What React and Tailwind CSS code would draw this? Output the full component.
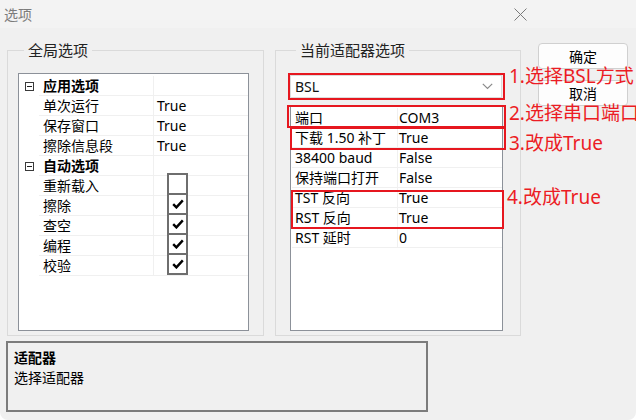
const font = "font-['Noto_Sans','Noto_Sans_CJK_SC',sans-serif]";

const globalRows = [
  { type: 'cat', label: '应用选项' },
  { label: '单次运行', value: 'True' },
  { label: '保存窗口', value: 'True' },
  { label: '擦除信息段', value: 'True' },
  { type: 'cat', label: '自动选项' },
  { label: '重新载入', check: false },
  { label: '擦除', check: true },
  { label: '查空', check: true },
  { label: '编程', check: true },
  { label: '校验', check: true },
];

const adapterRows = [
  ['端口', 'COM3'],
  ['下载 1.50 补丁', 'True'],
  ['38400 baud', 'False'],
  ['保持端口打开', 'False'],
  ['TST 反向', 'True'],
  ['RST 反向', 'True'],
  ['RST 延时', '0'],
];

function Collapse() {
  return (
    <span className="ml-[6px] flex h-[9px] w-[9px] items-center justify-center border border-[#3a3a3a]">
      <span className="h-px w-[5px] bg-[#222]" />
    </span>
  );
}

function CheckBox({ checked }) {
  return (
    <span className="-mt-[3px] ml-[10px] flex h-[22px] w-[21px] items-center justify-center border-2 border-[#6e6e6e] bg-white">
      {checked && (
        <svg width="12" height="10" viewBox="0 0 12 10">
          <path d="M1.2 5.2 L4.4 8.4 L10.8 1.4" fill="none" stroke="#000" strokeWidth="2.4" />
        </svg>
      )}
    </span>
  );
}

function GlobalGrid() {
  return (
    <div className="h-[258px] w-[231px] border border-[#8c9199] bg-white pt-[2px]">
      {globalRows.map((r, i) => (
        <div key={i} className="flex h-[20px] text-[14px] leading-[20px] text-black">
          <div className="flex w-[20px] items-center">{r.type === 'cat' && <Collapse />}</div>
          <div
            className={`w-[114px] border-b border-[#f0f0f0] pl-[4px] ${r.type === 'cat' ? 'font-bold' : ''}`}
          >
            {r.label}
          </div>
          <div className="flex flex-1 items-start border-b border-l border-[#f0f0f0] pl-[3px]">
            {r.value}
            {r.check !== undefined && <CheckBox checked={r.check} />}
          </div>
        </div>
      ))}
    </div>
  );
}

function AdapterGrid() {
  return (
    <div className="mt-[8px] h-[225px] w-[213px] border border-[#8c9199] bg-white pl-[1px] pt-[1px]">
      {adapterRows.map(([k, v]) => (
        <div key={k} className="flex h-[20px] text-[14px] leading-[20px] text-black">
          <div className="w-[105px] border-b border-[#f0f0f0] pl-[3px]">{k}</div>
          <div className="flex-1 border-b border-l border-[#f0f0f0] pl-[1px]">{v}</div>
        </div>
      ))}
    </div>
  );
}

function Group({ title, className, children }) {
  return (
    <fieldset className={`border border-[#dadada] ${className}`}>
      <legend className="ml-[6px] px-[4px] text-[15px] leading-[20px] text-[#222]">{title}</legend>
      {children}
    </fieldset>
  );
}

function Button({ children, className }) {
  return (
    <button className={`h-[26px] w-[90px] rounded-[4px] border border-[#d0d0d0] bg-[#fdfdfd] text-[14px] text-black ${className}`}>
      {children}
    </button>
  );
}

export default function App() {
  return (
    <div className={`relative h-[420px] w-[636px] overflow-hidden rounded-b-[8px] bg-[#f0f0f0] ${font}`}>
      <div className="flex h-[28px] items-center justify-between bg-[#f3f3f3] pl-[4px] pr-[116px]">
        <span className="text-[14px] text-[#7c7c7c]">选项</span>
        <svg width="13" height="13" viewBox="0 0 13 13" className="translate-x-[7px]">
          <path d="M0.5 0.5 L12.5 12.5 M12.5 0.5 L0.5 12.5" stroke="#7a7a7a" strokeWidth="1" />
        </svg>
      </div>

      <div className="flex pt-[12px]">
        <Group title="全局选项" className="ml-[7px] h-[296px] w-[257px] pl-[10px] pt-[13px]">
          <GlobalGrid />
        </Group>

        <Group title="当前适配器选项" className="ml-[11px] h-[296px] w-[246px] pl-[14px] pt-[15px]">
          <div className="flex h-[23px] w-[212px] items-center justify-between border border-[#dcdcdc] bg-white pl-[4px] pr-[8px] text-[14px] text-[#111]">
            BSL
            <svg width="11" height="7" viewBox="0 0 11 7">
              <path d="M0.8 0.8 L5.5 5.5 L10.2 0.8" fill="none" stroke="#8a8a8a" strokeWidth="1.2" />
            </svg>
          </div>
          <AdapterGrid />
        </Group>

        <div className="ml-[17px] flex flex-col gap-[11px] pt-[3px]">
          <Button>确定</Button>
          <Button>取消</Button>
        </div>
      </div>

      <div className="ml-[6px] mt-[5px] h-[71px] w-[422px] border-2 border-[#7c7c7c] px-[6px] pt-[5px] text-[14px] leading-[20px] text-black">
        <div className="font-bold">适配器</div>
        <div>选择适配器</div>
      </div>

      {/* annotations */}
      <div className="pointer-events-none absolute left-[288px] top-[73px] h-[27px] w-[217px] border-2 border-[#e6171f]" />
      <div className="pointer-events-none absolute left-[287px] top-[105px] h-[23px] w-[219px] border-2 border-[#e6171f]" />
      <div className="pointer-events-none absolute left-[290px] top-[127px] h-[23px] w-[216px] border-2 border-[#e6171f]" />
      <div className="pointer-events-none absolute left-[291px] top-[190px] h-[39px] w-[213px] border-2 border-[#e6171f]" />
      <div className="absolute left-[509px] top-[63px] whitespace-nowrap text-[19px] leading-[26px] text-[#ec1c24]">1.选择BSL方式</div>
      <div className="absolute left-[509px] top-[100px] whitespace-nowrap text-[19px] leading-[26px] text-[#ec1c24]">2.选择串口端口</div>
      <div className="absolute left-[509px] top-[130px] whitespace-nowrap text-[19px] leading-[26px] text-[#ec1c24]">3.改成True</div>
      <div className="absolute left-[507px] top-[184px] whitespace-nowrap text-[19px] leading-[26px] text-[#ec1c24]">4.改成True</div>
    </div>
  );
}
